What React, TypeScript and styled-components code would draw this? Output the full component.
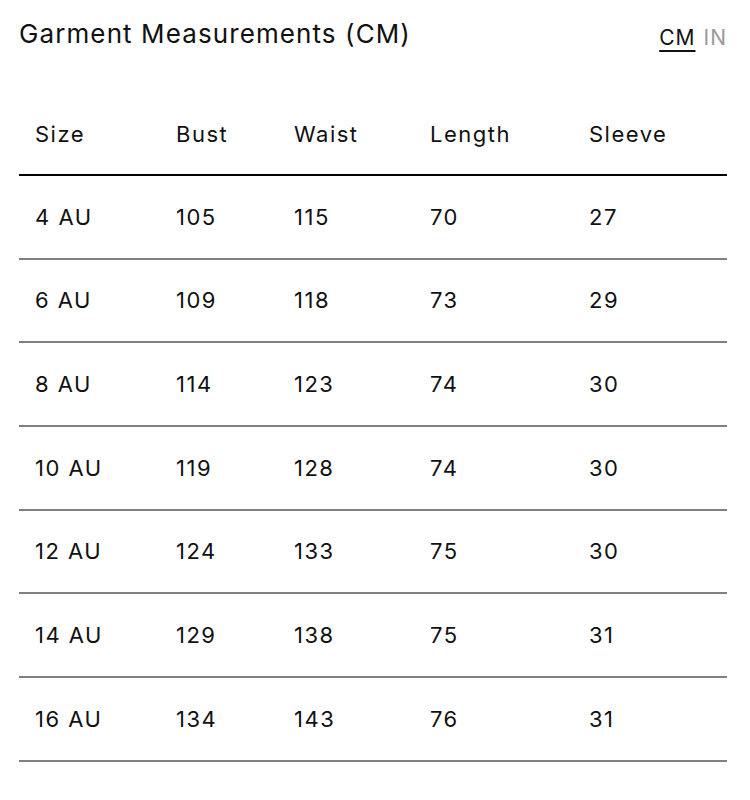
import React, { FC, useState } from "react";
import styled, { createGlobalStyle } from "styled-components";

const GlobalStyle = createGlobalStyle`
  html, body {
    margin: 0;
    padding: 0;
    background: #fff;
  }
  body {
    font-family: Inter, "Liberation Sans", Arial, sans-serif;
    color: #111;
  }
`;

const Wrapper = styled.div`
  padding: 17px 23px 0 19px;
`;

const Header = styled.div`
  display: flex;
  justify-content: space-between;
  align-items: flex-start;
`;

const Title = styled.h2`
  margin: 0;
  font-size: 26px;
  font-weight: 400;
  line-height: 34px;
  letter-spacing: 1.1px;
`;

const UnitSwitch = styled.div`
  display: flex;
  gap: 8px;
  padding-top: 8px;
`;

const UnitButton = styled.button<{ $active: boolean }>`
  border: 0;
  background: none;
  padding: 0;
  font-family: inherit;
  font-size: 21px;
  letter-spacing: 1px;
  line-height: 26px;
  cursor: pointer;
  color: ${(p) => (p.$active ? "#111" : "#999")};
  text-decoration: ${(p) => (p.$active ? "underline" : "none")};
  text-decoration-thickness: 2px;
  text-underline-offset: 5px;
`;

const Table = styled.table`
  width: 100%;
  table-layout: fixed;
  margin-top: 43px;
  border-collapse: collapse;
  font-size: 22px;
  letter-spacing: 1.5px;
`;

const HeadCell = styled.th<{ $w: number }>`
  box-sizing: border-box;
  width: ${(p) => p.$w}px;
  text-align: left;
  font-weight: 400;
  padding: 0 0 0 16px;
  height: 81px;
  border-bottom: 2px solid #000;
`;

const Row = styled.tr`
  border-bottom: 2px solid #808080;
`;

const Cell = styled.td`
  padding: 0 0 0 16px;
  height: 81.67px;
`;

const columns = [
  { label: "Size", w: 141 },
  { label: "Bust", w: 118 },
  { label: "Waist", w: 136 },
  { label: "Length", w: 159 },
  { label: "Sleeve", w: 154 },
];

const rows = [
  ["4 AU", "105", "115", "70", "27"],
  ["6 AU", "109", "118", "73", "29"],
  ["8 AU", "114", "123", "74", "30"],
  ["10 AU", "119", "128", "74", "30"],
  ["12 AU", "124", "133", "75", "30"],
  ["14 AU", "129", "138", "75", "31"],
  ["16 AU", "134", "143", "76", "31"],
];

const App: FC = () => {
  const [unit, setUnit] = useState<"CM" | "IN">("CM");

  return (
    <Wrapper>
      <GlobalStyle />
      <Header>
        <Title>Garment Measurements (CM)</Title>
        <UnitSwitch>
          <UnitButton $active={unit === "CM"} onClick={() => setUnit("CM")}>
            CM
          </UnitButton>
          <UnitButton $active={unit === "IN"} onClick={() => setUnit("IN")}>
            IN
          </UnitButton>
        </UnitSwitch>
      </Header>
      <Table>
        <thead>
          <tr>
            {columns.map((c) => (
              <HeadCell key={c.label} $w={c.w}>
                {c.label}
              </HeadCell>
            ))}
          </tr>
        </thead>
        <tbody>
          {rows.map((r) => (
            <Row key={r[0]}>
              {r.map((v, i) => (
                <Cell key={i}>{v}</Cell>
              ))}
            </Row>
          ))}
        </tbody>
      </Table>
    </Wrapper>
  );
};

export default App;
